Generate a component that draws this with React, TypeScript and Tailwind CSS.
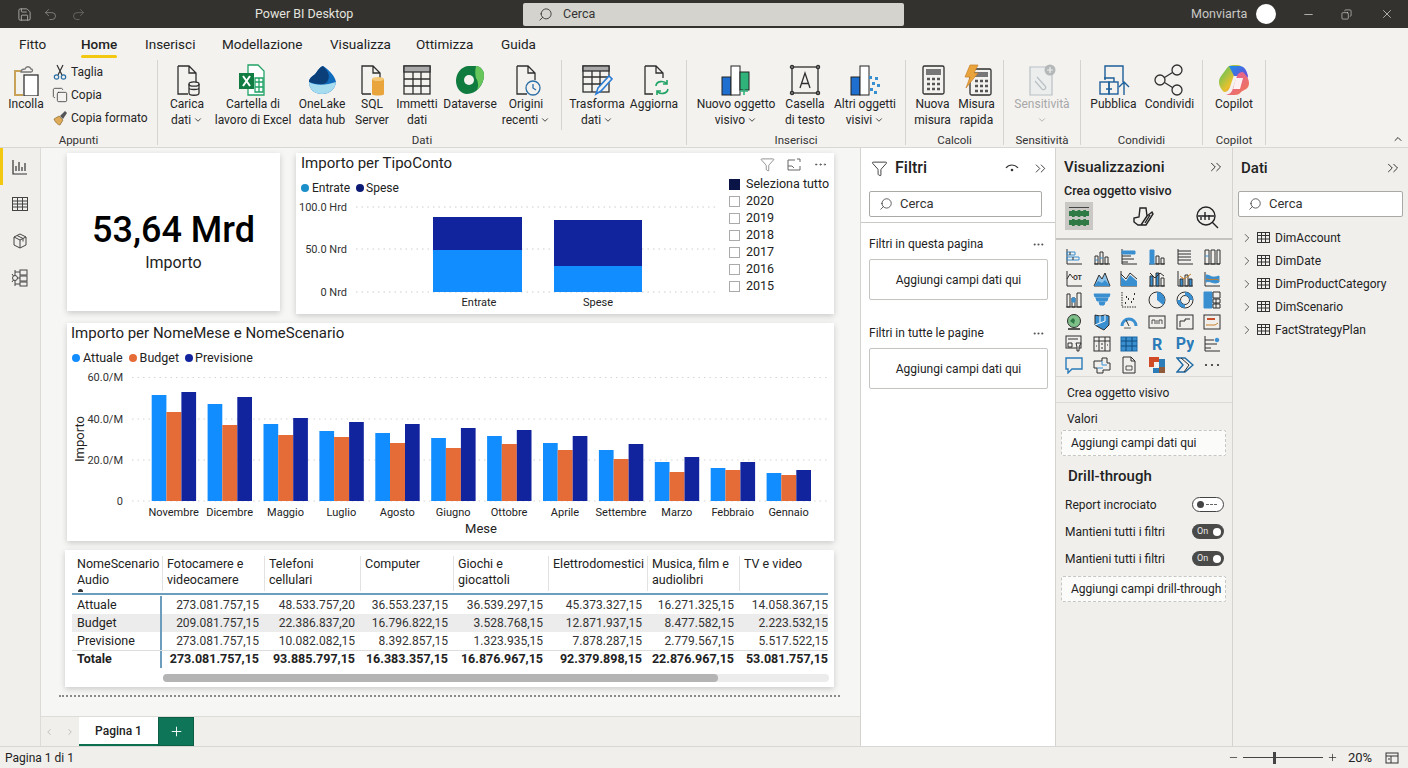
import { ReactNode } from 'react'
import { ChevronDown, ChevronRight, ChevronsRight, ChevronUp, Copy, Ellipsis, Funnel, Minus, Plus, Redo2, Save, Search, Undo2, X } from 'lucide-react'

const INK = '#2f2f2f'
const BLUE = '#3a8fd1'
const LIGHT = '#118DFF'
const NAVY = '#12239E'
const ORANGE = '#E66C37'

const Ico = ({ children }: { children: ReactNode }) => (
  <svg viewBox="0 0 32 32" className="h-[32px] w-[32px]" fill="none" stroke={INK} strokeWidth="1.3">
    {children}
  </svg>
)

const ribbonIcons: Record<string, ReactNode> = {
  paste: (
    <Ico>
      <path d="M13 7H5v24h8" stroke="#c9a25a" strokeWidth="2" />
      <path d="M11 8c0-2 2-3 4-3 1-3 5-3 6 0 2 0 2 3 0 3z" stroke="#777" fill="#f3f2ef" />
      <rect x="14" y="11" width="14" height="21" fill="#fff" stroke="#333" />
    </Ico>
  ),
  load: (
    <Ico>
      <path d="M7 2h11l7 7v9 M18 2v7h7 M7 2v28h10" />
      <ellipse cx="23" cy="20" rx="5" ry="2.2" />
      <path d="M18 20v9c0 3 10 3 10 0v-9 M18 24c0 2 10 2 10 0" />
    </Ico>
  ),
  excel: (
    <Ico>
      <path d="M11 1h10l6 6v24H11z" fill="#fff" stroke="#21a366" />
      <path d="M18 14h8v14h-8z M18 18h8 M18 23h8 M22 14v14" stroke="#21a366" />
      <rect x="2" y="9" width="15" height="16" fill="#107c41" stroke="none" />
      <path d="M6 12l7 10 M13 12l-7 10" stroke="#fff" strokeWidth="2" />
    </Ico>
  ),
  lake: (
    <svg viewBox="0 0 32 32" className="h-[32px] w-[32px]">
      <path d="M17 2c6 4 12 10 13 16-1 8-7 12-14 12C8 30 3 25 3 18 3 13 8 12 10 9c2-3 4-6 7-7z" fill="#0f6cbd" />
      <path d="M17 2c5 5 8 10 4 16-3 4-12 2-18 0C3 13 8 12 10 9c2-3 4-6 7-7z" fill="#0b3f7a" />
      <path d="M3 18c7 4 18 3 27 0-1 8-7 12-14 12C8 30 3 25 3 18z" fill="#a6dcf0" />
    </svg>
  ),
  sql: (
    <Ico>
      <path d="M6 30V2h11l7 7v5 M17 2v7h7 M6 30h9" />
      <path d="M16 15h12v15c0 2-12 2-12 0z" fill="#e9a43b" stroke="none" />
      <ellipse cx="22" cy="15" rx="6" ry="2" fill="#f4c877" stroke="none" />
    </Ico>
  ),
  enter: (
    <Ico>
      <rect x="3" y="2" width="26" height="28" />
      <rect x="3" y="2" width="26" height="6" fill="#aaa" />
      <path d="M3 15h26 M3 22h26 M12 8v22 M20 8v22" />
    </Ico>
  ),
  dataverse: (
    <svg viewBox="0 0 32 32" className="h-[32px] w-[32px]">
      <path d="M14 2c-7 1-12 7-12 15 0 7 5 13 11 13 9 0 17-9 17-19 0-5-4-9-8-9z" fill="#0f7b3f" />
      <path d="M22 2c4 0 8 4 8 9 0 6-3 11-7 15 2-4 1-9-1-12-1-3-1-8 0-12z" fill="#66c65a" />
      <circle cx="15" cy="16" r="5" fill="#f3f2ef" />
    </svg>
  ),
  recent: (
    <Ico>
      <path d="M7 2h11l7 7v7 M18 2v7h7 M7 2v28h10" />
      <circle cx="23" cy="24" r="7" fill="#f3f2ef" stroke="#2b6ea6" />
      <path d="M23 20v4l3 2" stroke="#2b6ea6" />
    </Ico>
  ),
  transform: (
    <Ico>
      <rect x="2" y="2" width="26" height="26" />
      <rect x="2" y="2" width="26" height="5" fill="#aaa" />
      <path d="M2 13h26 M2 20h20 M11 7v21 M19 7v16" />
      <path d="M15 30l2-6L28 12l3 3-11 12z" fill="#f3f2ef" stroke="#2b7cd3" strokeWidth="1.6" />
    </Ico>
  ),
  refresh: (
    <Ico>
      <path d="M7 2h11l7 7v5 M18 2v7h7 M7 2v28h8" />
      <path d="M18 22c0-5 8-6 11-2 M29 16v4h-4 M30 25c-1 5-8 6-11 2 M19 31v-4h4" stroke="#21a366" strokeWidth="1.6" />
    </Ico>
  ),
  visual: (
    <svg viewBox="0 0 32 32" className="h-[32px] w-[32px]">
      <rect x="2" y="13" width="9" height="18" fill="#1f6fd0" stroke="#222" />
      <rect x="11" y="2" width="9" height="29" fill="#fff" stroke="#222" />
      <rect x="20" y="8" width="9" height="18" fill="#2fb37a" stroke="#222" />
      <path d="M24 24v7 M20 27h8" stroke="#2fb37a" strokeWidth="1.6" />
    </svg>
  ),
  textbox: (
    <Ico>
      <rect x="3" y="3" width="26" height="26" />
      <path d="M11 24l5-15 5 15 M12.5 19.5h7" />
      <circle cx="3" cy="3" r="1.6" fill="#888" />
      <circle cx="29" cy="3" r="1.6" fill="#888" />
      <circle cx="3" cy="29" r="1.6" fill="#888" />
      <circle cx="29" cy="29" r="1.6" fill="#888" />
    </Ico>
  ),
  more: (
    <svg viewBox="0 0 32 32" className="h-[32px] w-[32px]">
      <rect x="2" y="13" width="9" height="18" fill="#1f6fd0" stroke="#222" />
      <rect x="11" y="2" width="9" height="29" fill="#fff" stroke="#222" />
      <rect x="20" y="12" width="3" height="3" fill="#3a8fd1" />
      <rect x="26" y="13" width="3" height="3" fill="#3a8fd1" />
      <rect x="23" y="18" width="3" height="3" fill="#3a8fd1" />
      <rect x="28" y="20" width="3" height="3" fill="#3a8fd1" />
      <rect x="21" y="24" width="3" height="3" fill="#3a8fd1" />
      <rect x="25" y="27" width="3" height="3" fill="#3a8fd1" />
    </svg>
  ),
  calc: (
    <Ico>
      <rect x="6" y="2" width="21" height="28" rx="1.5" />
      <rect x="9" y="5" width="15" height="6" fill="#777" stroke="none" />
      <path d="M10 15h3 M15 15h3 M20 15h3 M10 20h3 M15 20h3 M20 20h3 M10 25h3 M15 25h3 M20 25h3" strokeWidth="2.6" stroke="#555" />
    </Ico>
  ),
  quick: (
    <Ico>
      <rect x="9" y="5" width="21" height="26" rx="1.5" />
      <rect x="13" y="8" width="14" height="5" fill="#777" stroke="none" />
      <path d="M14 17h3 M19 17h3 M24 17h3 M14 22h3 M19 22h3 M24 22h3 M14 27h3 M19 27h3 M24 27h3" strokeWidth="2.6" stroke="#555" />
      <path d="M9 1h8l-4 8h4L5 24l4-11H4z" fill="#e9a43b" stroke="#c9802a" strokeWidth="0.7" />
    </Ico>
  ),
  sens: (
    <svg viewBox="0 0 32 32" className="h-[32px] w-[32px]" fill="none" stroke="#b9c0c4" strokeWidth="1.2">
      <path d="M4 3h16l6 6v22H4z" fill="#eceeee" />
      <path d="M11 13l8 9c2 2-1 5-3 3l-7-8" />
      <circle cx="24" cy="6" r="5.5" fill="#b5b8b8" stroke="none" />
      <path d="M24 3v6 M21 6h6" stroke="#eee" />
    </svg>
  ),
  publish: (
    <svg viewBox="0 0 32 32" className="h-[32px] w-[32px]" fill="none" stroke="#1d5f99" strokeWidth="1.4">
      <path d="M7 16V2h18v16" />
      <rect x="2" y="18" width="9" height="12" />
      <rect x="11" y="18" width="9" height="12" />
      <path d="M6 14h10v4 M8 25h6" />
      <path d="M26 31V18 M21 23l5-5 5 5" />
    </svg>
  ),
  share: (
    <Ico>
      <circle cx="23" cy="6" r="5" />
      <circle cx="6" cy="16" r="5" />
      <circle cx="23" cy="26" r="5" />
      <path d="M10.5 13.5L18.5 8.5 M10.5 18.5l8 5" />
    </Ico>
  ),
  copilot: (
    <svg viewBox="0 0 32 32" className="h-[32px] w-[32px]">
      <defs>
        <linearGradient id="cpa" x1="0" y1="0" x2="1" y2="1">
          <stop offset="0" stopColor="#1b8fe8" />
          <stop offset="1" stopColor="#7a3fd6" />
        </linearGradient>
        <linearGradient id="cpb" x1="0" y1="0" x2="1" y2="1">
          <stop offset="0" stopColor="#41c463" />
          <stop offset="0.6" stopColor="#e8c12e" />
          <stop offset="1" stopColor="#e8563a" />
        </linearGradient>
        <linearGradient id="cpc" x1="0" y1="0" x2="1" y2="1">
          <stop offset="0" stopColor="#e25bb0" />
          <stop offset="1" stopColor="#f0794a" />
        </linearGradient>
      </defs>
      <path d="M9 4c2-3 5-3 9-3h5c-4 1-5 3-6 7l-5 15c-1 3-3 5-6 5 0 0-5-4-5-10 0-5 4-8 8-14z" fill="url(#cpb)" />
      <path d="M11 2h10c4 0 7 2 9 10l-2 6-6-6h-6z" fill="url(#cpa)" />
      <path d="M23 28c-2 3-5 3-9 3H8c4-1 6-3 7-7l4-12c1-3 3-4 6-4 0 0 6 5 6 11s-4 6-8 9z" fill="url(#cpc)" />
      <path d="M18 14h7l-3 11h-7z" fill="#fff" opacity="0.9" />
    </svg>
  ),
}

type RibbonItem = { w: string; icon: string; lines: string[]; chevron?: boolean; muted?: boolean }

const dataItems: RibbonItem[] = [
  { w: 'w-[58px]', icon: 'load', lines: ['Carica', 'dati'], chevron: true },
  { w: 'w-[74px]', icon: 'excel', lines: ['Cartella di', 'lavoro di Excel'] },
  { w: 'w-[64px]', icon: 'lake', lines: ['OneLake', 'data hub'] },
  { w: 'w-[36px]', icon: 'sql', lines: ['SQL', 'Server'] },
  { w: 'w-[54px]', icon: 'enter', lines: ['Immetti', 'dati'] },
  { w: 'w-[52px]', icon: 'dataverse', lines: ['Dataverse'] },
  { w: 'w-[60px]', icon: 'recent', lines: ['Origini', 'recenti'], chevron: true },
]

const RibbonButton = ({ item }: { item: RibbonItem }) => (
  <div className={`${item.w} flex shrink-0 flex-col items-center pt-[4px]`}>
    <div className="flex h-[32px] items-center justify-center">{ribbonIcons[item.icon]}</div>
    {item.lines.map((line, i) => (
      <div
        key={line}
        className={`flex items-center gap-[2px] whitespace-nowrap text-[12px] leading-[16px] ${item.muted ? 'text-[#a8a8a8]' : 'text-[#252525]'}`}
      >
        {line}
        {item.chevron && i === item.lines.length - 1 && <ChevronDown size={10} strokeWidth={2} />}
      </div>
    ))}
    {item.muted && <ChevronDown size={10} color="#a8a8a8" className="mt-[3px]" />}
  </div>
)

const RibbonGroup = ({ w, label, children }: { w: string; label: string; children: ReactNode }) => (
  <div className={`${w} flex shrink-0 flex-col`}>
    <div className="flex h-[72px] justify-center">{children}</div>
    <div className="h-[13px] text-center text-[11.5px] leading-[16px] text-[#333]">{label}</div>
  </div>
)

const Sep = () => <div className="h-[85px] w-px shrink-0 bg-[#d5d4d0]" />

const TitleBar = () => (
  <div className="flex h-[28px] items-center bg-[#33322f] text-[#e4e3df]">
    <div className="flex w-[523px] items-center">
      <Save size={15} strokeWidth={1.3} color="#bdbdb8" className="ml-[17px]" />
      <Undo2 size={15} strokeWidth={1.3} color="#8c8b87" className="ml-[11px]" />
      <Redo2 size={15} strokeWidth={1.3} color="#6f6e6a" className="ml-[13px]" />
      <span className="ml-[169px] text-[12.5px]">Power BI Desktop</span>
    </div>
    <div className="flex h-[23px] w-[381px] items-center rounded-[2px] bg-[#d4d3ce] pl-[15px] text-[#333]">
      <Search size={15} strokeWidth={1.4} className="-scale-x-100" />
      <span className="ml-[10px] text-[12.5px]">Cerca</span>
    </div>
    <span className="ml-[287px] text-[12.5px] text-[#c9c8c4]">Monviarta</span>
    <div className="ml-[9px] h-[20px] w-[20px] rounded-full bg-white" />
    <Minus size={13} strokeWidth={1.3} className="ml-[26px]" />
    <Copy size={11} strokeWidth={1.3} className="ml-[26px] -scale-x-100" />
    <X size={14} strokeWidth={1.2} className="ml-[28px]" />
  </div>
)

const MenuTabs = () => (
  <div className="flex h-[32px] items-center bg-[#f3f2ef] pl-[19px] text-[13.5px] text-[#222]">
    <span className="w-[62px]">Fitto</span>
    <span className="w-[64px]">
      <span className="relative font-medium">
        Home
        <span className="absolute bottom-[-6px] left-0 h-[3px] w-full rounded-full bg-[#f2c811]" />
      </span>
    </span>
    <span className="w-[77px]">Inserisci</span>
    <span className="w-[108px]">Modellazione</span>
    <span className="w-[86px]">Visualizza</span>
    <span className="w-[85px]">Ottimizza</span>
    <span>Guida</span>
  </div>
)

const Ribbon = () => (
  <div className="flex h-[88px] border-b border-[#d8d7d3] bg-[#f3f2ef]">
    <RibbonGroup w="w-[157px]" label="Appunti">
      <div className="flex w-full">
        <RibbonButton item={{ w: 'w-[52px]', icon: 'paste', lines: ['Incolla'] }} />
        <div className="flex flex-col gap-[5px] pt-[3px] text-[12px] leading-[18px] text-[#252525]">
          <div className="flex items-center gap-[3px]">
            <svg viewBox="0 0 16 16" className="h-[16px] w-[16px]" fill="none" strokeWidth="1.2">
              <path d="M5 1l5 10 M11 1L6 11" stroke="#333" />
              <circle cx="4.5" cy="13" r="2.2" stroke="#2b6ea6" />
              <circle cx="11.5" cy="13" r="2.2" stroke="#2b6ea6" />
            </svg>
            Taglia
          </div>
          <div className="flex items-center gap-[3px]">
            <Copy size={16} strokeWidth={1.2} color="#333" />
            Copia
          </div>
          <div className="flex items-center gap-[3px]">
            <svg viewBox="0 0 16 16" className="h-[16px] w-[16px]">
              <path d="M2 9l5-3 4 4-3 5c-2 0-5-3-6-6z" fill="#e0ab58" stroke="#8a6a30" strokeWidth="0.7" />
              <path d="M8 6l5-5 2 2-4 6z" fill="#555" />
            </svg>
            Copia formato
          </div>
        </div>
      </div>
    </RibbonGroup>
    <Sep />
    <RibbonGroup w="w-[528px]" label="Dati">
      <div className="flex w-full">
        {dataItems.map((item) => (
          <RibbonButton key={item.icon} item={item} />
        ))}
        <div className="mr-px h-[70px] w-[6px] shrink-0 border-r border-[#d5d4d0]" />
        <RibbonButton item={{ w: 'w-[68px]', icon: 'transform', lines: ['Trasforma', 'dati'], chevron: true }} />
        <RibbonButton item={{ w: 'w-[46px]', icon: 'refresh', lines: ['Aggiorna'] }} />
      </div>
    </RibbonGroup>
    <Sep />
    <RibbonGroup w="w-[218px]" label="Inserisci">
      <RibbonButton item={{ w: 'w-[94px]', icon: 'visual', lines: ['Nuovo oggetto', 'visivo'], chevron: true }} />
      <RibbonButton item={{ w: 'w-[44px]', icon: 'textbox', lines: ['Casella', 'di testo'] }} />
      <RibbonButton item={{ w: 'w-[76px]', icon: 'more', lines: ['Altri oggetti', 'visivi'], chevron: true }} />
    </RibbonGroup>
    <Sep />
    <RibbonGroup w="w-[97px]" label="Calcoli">
      <RibbonButton item={{ w: 'w-[44px]', icon: 'calc', lines: ['Nuova', 'misura'] }} />
      <RibbonButton item={{ w: 'w-[44px]', icon: 'quick', lines: ['Misura', 'rapida'] }} />
    </RibbonGroup>
    <Sep />
    <RibbonGroup w="w-[76px]" label="Sensitività">
      <RibbonButton item={{ w: 'w-[76px]', icon: 'sens', lines: ['Sensitività'], muted: true }} />
    </RibbonGroup>
    <Sep />
    <RibbonGroup w="w-[121px]" label="Condividi">
      <RibbonButton item={{ w: 'w-[56px]', icon: 'publish', lines: ['Pubblica'] }} />
      <RibbonButton item={{ w: 'w-[56px]', icon: 'share', lines: ['Condividi'] }} />
    </RibbonGroup>
    <Sep />
    <RibbonGroup w="w-[62px]" label="Copilot">
      <RibbonButton item={{ w: 'w-[62px]', icon: 'copilot', lines: ['Copilot'] }} />
    </RibbonGroup>
    <Sep />
    <div className="flex flex-1 items-end justify-end pb-[2px] pr-[4px]">
      <ChevronUp size={12} strokeWidth={2} color="#333" />
    </div>
  </div>
)

const Rail = () => (
  <div className="flex w-[41px] shrink-0 flex-col border-r border-[#dcdbd7] bg-[#f0efeb]">
    <div className="flex h-[37px] items-center border-l-[3px] border-[#f2c811] pl-[9px]">
      <svg viewBox="0 0 16 16" className="h-[16px] w-[16px]" fill="none" stroke="#333" strokeWidth="1.2">
        <path d="M1 1v14h14 M4 12V7 M7 12V3 M10 12V8 M13 12V4" />
      </svg>
    </div>
    <div className="flex h-[37px] items-center pl-[12px]">
      <svg viewBox="0 0 16 16" className="h-[16px] w-[16px]" fill="none" stroke="#444" strokeWidth="1">
        <rect x="0.5" y="1.5" width="15" height="13" />
        <path d="M0.5 5h15 M0.5 8h15 M0.5 11h15 M5.5 1.5v13 M10.5 1.5v13" />
      </svg>
    </div>
    <div className="flex h-[37px] items-center pl-[12px]">
      <svg viewBox="0 0 16 16" className="h-[16px] w-[16px]" fill="none" stroke="#444" strokeWidth="1">
        <path d="M8 1l6 3v8l-6 3-6-3V4z M2 4l6 3 6-3 M8 7v8 M5 2.5l6 3v3" />
      </svg>
    </div>
    <div className="flex h-[37px] items-center pl-[11px]">
      <svg viewBox="0 0 18 18" className="h-[18px] w-[18px]" fill="none" stroke="#444" strokeWidth="1">
        <rect x="9" y="1" width="7" height="5" />
        <rect x="9" y="7" width="7" height="5" />
        <rect x="9" y="13" width="7" height="4" />
        <circle cx="4" cy="9" r="2.5" />
        <path d="M6.5 9H9 M4 1v5.5 M4 11.5V17 M1 5l1.5 2 M1 13l1.5-2 M4 3h5 M4 15h5" />
      </svg>
    </div>
  </div>
)

const Dot = ({ color }: { color: string }) => <span className="h-[8px] w-[8px] shrink-0 rounded-full" style={{ backgroundColor: color }} />

const years = ['2020', '2019', '2018', '2017', '2016', '2015']

const TypeChart = () => (
  <div className="flex h-[161px] w-[538px] bg-white shadow-[0_2px_6px_rgba(0,0,0,0.18)]">
    <div className="flex w-[429px] flex-col">
      <div className="h-[20px] pl-[5px] text-[15px] leading-[20px] text-[#222]">Importo per TipoConto</div>
      <div className="mt-[5px] flex h-[20px] items-center pl-[5px] text-[12px] text-[#222]">
        <Dot color="#1b8fc9" />
        <span className="ml-[3px]">Entrate</span>
        <span className="ml-[6px]" />
        <Dot color="#0d1a73" />
        <span className="ml-[2px]">Spese</span>
      </div>
      <svg viewBox="0 0 429 112" className="mt-px h-[112px] w-[429px]" fontFamily="Roboto, sans-serif" fontSize="11">
        <path d="M60 8h362 M60 50h362 M60 93h362" stroke="#ccc" strokeDasharray="1.5 4" />
        <text x="51" y="12" textAnchor="end" fill="#333">100.0 Hrd</text>
        <text x="51" y="54" textAnchor="end" fill="#333">50.0 Nrd</text>
        <text x="51" y="97" textAnchor="end" fill="#333">0 Nrd</text>
        <rect x="137" y="18" width="89" height="33" fill={NAVY} />
        <rect x="137" y="51" width="89" height="42" fill={LIGHT} />
        <rect x="258" y="21" width="88" height="46" fill={NAVY} />
        <rect x="258" y="67" width="88" height="26" fill={LIGHT} />
        <text x="183" y="107" textAnchor="middle" fill="#222">Entrate</text>
        <text x="302" y="107" textAnchor="middle" fill="#222">Spese</text>
      </svg>
    </div>
    <div className="flex flex-1 flex-col">
      <div className="flex h-[23px] items-center justify-end gap-[12px] pr-[6px]">
        <Funnel size={15} strokeWidth={1} color="#555" />
        <svg viewBox="0 0 14 14" className="h-[14px] w-[14px]" fill="none" stroke="#666" strokeWidth="1">
          <path d="M8 2H1v10h12V8 M10 1h3v3 M1 8h4l2 2" />
        </svg>
        <Ellipsis size={15} strokeWidth={1.5} color="#555" />
      </div>
      <div className="flex h-[17px] items-center text-[12.5px] text-[#222]">
        <span className="ml-[4px] mr-[6px] h-[11px] w-[11px] bg-[#0a1447]" />
        Seleziona tutto
      </div>
      {years.map((y) => (
        <div key={y} className="flex h-[17px] items-center text-[12.5px] text-[#222]">
          <span className="ml-[4px] mr-[6px] h-[11px] w-[11px] border border-[#aaa] bg-white" />
          {y}
        </div>
      ))}
    </div>
  </div>
)

const months: [string, number, number, number][] = [
  ['Novembre', 395, 412, 392],
  ['Dicembre', 404, 425, 397],
  ['Maggio', 424, 435, 418],
  ['Luglio', 431, 437, 422],
  ['Agosto', 433, 443, 424],
  ['Giugno', 438, 448, 428],
  ['Ottobre', 436, 444, 430],
  ['Aprile', 443, 450, 436],
  ['Settembre', 450, 459, 444],
  ['Marzo', 462, 472, 457],
  ['Febbraio', 468, 470, 462],
  ['Gennaio', 473, 475, 470],
]

const MonthChart = () => (
  <div className="mt-[9px] flex h-[218px] w-[767px] flex-col bg-white shadow-[0_2px_6px_rgba(0,0,0,0.18)]">
    <div className="h-[20px] pl-[4px] text-[15px] leading-[20px] text-[#222]">Importo per NomeMese e NomeScenario</div>
    <div className="mt-[5px] flex h-[20px] items-center pl-[5px] text-[12.5px] text-[#222]">
      <Dot color={LIGHT} />
      <span className="ml-[3px]">Attuale</span>
      <span className="ml-[6px]" />
      <Dot color={ORANGE} />
      <span className="ml-[3px]">Budget</span>
      <span className="ml-[6px]" />
      <Dot color={NAVY} />
      <span className="ml-[2px]">Previsione</span>
    </div>
    <svg viewBox="0 0 767 173" className="h-[173px] w-[767px]" fontFamily="Roboto, sans-serif" fontSize="12">
      <path d="M65 9.5h696 M65 51h696 M65 92h696 M65 133h696" stroke="#d4d4d4" strokeDasharray="1.5 4" />
      <text x="56" y="13" textAnchor="end" fill="#333" fontSize="11">60.0/M</text>
      <text x="56" y="55" textAnchor="end" fill="#333" fontSize="11">40.0/M</text>
      <text x="56" y="96" textAnchor="end" fill="#333" fontSize="11">20.0/M</text>
      <text x="56" y="137" textAnchor="end" fill="#333" fontSize="11">0</text>
      <text transform="translate(17 71) rotate(-90)" textAnchor="middle" fill="#222" fontSize="13">Importo</text>
      {months.map(([name, a, b, p], i) => {
        const x = 84.7 + i * 55.9
        return (
          <g key={name}>
            <rect x={x} y={a - 368} width={14.7} height={501 - a} fill={LIGHT} />
            <rect x={x + 14.7} y={b - 368} width={15} height={501 - b} fill={ORANGE} />
            <rect x={x + 29.7} y={p - 368} width={14.7} height={501 - p} fill={NAVY} />
            <text x={x + 22} y={148} textAnchor="middle" fill="#222" fontSize="11">{name}</text>
          </g>
        )
      })}
      <text x="414" y="165" textAnchor="middle" fill="#222" fontSize="13">Mese</text>
    </svg>
  </div>
)

const columns = ['w-[102px]', 'w-[96px]', 'w-[93px]', 'w-[95px]', 'w-[99px]', 'w-[92px]', 'w-[94px]']
const headers = [['Fotocamere e', 'videocamere'], ['Telefoni', 'cellulari'], ['Computer'], ['Giochi e', 'giocattoli'], ['Elettrodomestici'], ['Musica, film e', 'audiolibri'], ['TV e video']]
const rows: [string, string[]][] = [
  ['Attuale', ['273.081.757,15', '48.533.757,20', '36.553.237,15', '36.539.297,15', '45.373.327,15', '16.271.325,15', '14.058.367,15']],
  ['Budget', ['209.081.757,15', '22.386.837,20', '16.796.822,15', '3.528.768,15', '12.871.937,15', '8.477.582,15', '2.223.532,15']],
  ['Previsione', ['273.081.757,15', '10.082.082,15', '8.392.857,15', '1.323.935,15', '7.878.287,15', '2.779.567,15', '5.517.522,15']],
]
const totals = ['273.081.757,15', '93.885.797,15', '16.383.357,15', '16.876.967,15', '92.379.898,15', '22.876.967,15', '53.081.757,15']

const Matrix = () => (
  <div className="-ml-[2px] mt-[9px] h-[137px] w-[769px] overflow-hidden bg-white pl-[7px] pt-[6px] shadow-[0_2px_6px_rgba(0,0,0,0.18)]">
    <div className="flex h-[39px] w-[756px] border-b-2 border-[#6d9dbd] text-[12.5px] leading-[16px] text-[#222]">
      <div className="w-[90px] shrink-0 pl-[5px]">
        NomeScenario
        <br />
        Audio
        <div className="ml-[1px] mt-[1px] h-[3px] w-[5px] rounded-t-full bg-[#333]" />
      </div>
      {headers.map((h, i) => (
        <div key={h[0]} className={`${columns[i]} h-[35px] shrink-0 border-l border-[#e2e2e2] pl-[4px]`}>
          {h.map((line) => (
            <div key={line} className="whitespace-nowrap">{line}</div>
          ))}
        </div>
      ))}
    </div>
    {rows.map(([name, values], r) => (
      <div key={name} className={`flex h-[18px] w-[756px] items-center text-[12px] text-[#333] ${r === 0 ? 'mt-px' : ''} ${r === 1 ? 'bg-[#ececec]' : ''}`}>
        <div className="flex h-full w-[90px] shrink-0 items-center border-r-2 border-[#6d9dbd] pl-[5px] text-[12.5px] text-[#222]">{name}</div>
        {values.map((v, i) => (
          <div key={i} className={`${columns[i]} shrink-0 pr-[5px] text-right`}>{v}</div>
        ))}
      </div>
    ))}
    <div className="flex h-[18px] w-[756px] items-center border-t border-[#ddd] text-[12.5px] font-bold text-[#222]">
      <div className="flex h-full w-[90px] shrink-0 items-center border-r-2 border-[#6d9dbd] pl-[5px]">Totale</div>
      {totals.map((v, i) => (
        <div key={i} className={`${columns[i]} shrink-0 pr-[5px] text-right`}>{v}</div>
      ))}
    </div>
    <div className="ml-[91px] mt-[6px] h-[8px] w-[666px] rounded-full bg-[#ececec]">
      <div className="h-full w-[555px] rounded-full bg-[#b4b4b4]" />
    </div>
  </div>
)

const Canvas = () => (
  <div className="flex-1 bg-[#f6f6f4]">
    <div className="ml-[18px] h-[549px] w-[781px] border-b-2 border-dotted border-[#8a8a8a] pl-[8px] pt-[5px]">
      <div className="flex gap-[16px]">
        <div className="flex h-[158px] w-[213px] flex-col items-center justify-center bg-white pt-[18px] shadow-[0_2px_6px_rgba(0,0,0,0.18)]">
          <div className="text-[36px] font-medium leading-[42px] text-black">53,64 Mrd</div>
          <div className="mt-[2px] text-[16px] leading-[20px] text-[#222]">Importo</div>
        </div>
        <TypeChart />
      </div>
      <MonthChart />
      <Matrix />
    </div>
  </div>
)

const PageTabs = () => (
  <div className="flex h-[30px] shrink-0 border-t border-[#dddcd8] bg-[#f0efeb]">
    <ChevronRight size={10} color="#b5b5b5" className="ml-[3px] mt-[10px] rotate-180" />
    <ChevronRight size={10} color="#b5b5b5" className="ml-[11px] mt-[10px]" />
    <div className="ml-[4px] flex w-[79px] items-center justify-center border-b-2 border-[#0b6e4f] bg-white text-[12px] font-medium text-[#222]">Pagina 1</div>
    <div className="flex w-[36px] items-center justify-center border border-[#0a5f44] bg-[#0f7558]">
      <Plus size={15} strokeWidth={1.5} color="#fff" />
    </div>
  </div>
)

const SearchBox = ({ w, bg }: { w: string; bg: string }) => (
  <div className={`${w} ${bg} flex h-[26px] items-center rounded-[2px] border border-[#a9a9a6] pl-[9px] text-[13px] text-[#333]`}>
    <Search size={14} strokeWidth={1.3} className="-scale-x-100" />
    <span className="ml-[7px]">Cerca</span>
  </div>
)

const FilterPane = () => (
  <div className="w-[196px] shrink-0 border-l border-r border-[#d4d3cf] bg-white text-[#222]">
    <div className="flex h-[38px] items-center pl-[10px] pt-[2px]">
      <Funnel size={17} strokeWidth={1.2} className="shrink-0" />
      <span className="ml-[7px] w-[30px] text-[16px] font-medium">Filtri</span>
      <svg viewBox="0 0 16 16" className="ml-[79px] h-[16px] w-[16px] shrink-0" fill="none" stroke="#333" strokeWidth="1.2">
        <path d="M2 8c3-4 9-4 12 0" />
        <circle cx="8" cy="10" r="1.3" fill="#333" stroke="none" />
      </svg>
      <ChevronsRight size={17} strokeWidth={1.2} className="ml-[12px] shrink-0" />
    </div>
    <div className="pb-[5px] pl-[8px] pt-[5px]">
      <SearchBox w="w-[173px]" bg="bg-white" />
    </div>
    <div className="border-t border-[#c9c9c6] px-[8px]">
      <div className="flex h-[36px] items-center justify-between pr-[2px] pt-[6px] text-[12px]">
        Filtri in questa pagina
        <Ellipsis size={13} color="#555" />
      </div>
      <div className="flex h-[41px] w-[179px] items-center justify-center rounded-[2px] border border-[#c4c4c1] text-[12px]">Aggiungi campi dati qui</div>
      <div className="mt-[19px] flex h-[28px] items-center justify-between pr-[2px] text-[12px]">
        Filtri in tutte le pagine
        <Ellipsis size={13} color="#555" />
      </div>
      <div className="mt-px flex h-[41px] w-[179px] items-center justify-center rounded-[2px] border border-[#c4c4c1] text-[12px]">Aggiungi campi dati qui</div>
    </div>
  </div>
)

const g = (children: ReactNode) => children

const gallery: ReactNode[] = [
  g(<><path d="M2 1v15h15" /><path d="M2 4h8v3H2z M2 9h12v3H2z" stroke={BLUE} /><path d="M5 4v3 M8 9v3" /></>),
  g(<><path d="M1 16h16" /><path d="M2 8h3v8H2z M7 4h3v12H7z M12 9h3v7h-3z" /><path d="M7 10h3 M2 12h3" stroke={BLUE} /></>),
  g(<><path d="M2 1v15h15" /><path d="M2 3h13v3H2z" fill={BLUE} stroke={BLUE} /><path d="M2 8h9 M2 11h12 M2 14h6" /></>),
  g(<><path d="M1 16h16" /><path d="M2 2h4v14H2z" fill={BLUE} stroke={BLUE} /><path d="M8 8h3v8H8z M13 10h3v6h-3z" /></>),
  g(<><path d="M2 1v15h15" /><path d="M2 3h13 M2 6h13 M2 9h13 M2 12h13" /></>),
  g(<><path d="M1 16h16" /><path d="M2 2h4v14H2z M8 2h4v14H8z M14 2h3v14h-3z" /><path d="M2 8h4" stroke={BLUE} /></>),
  g(<><path d="M2 1v15h15" /><path d="M2 9l3-5 3 4" /><text x="8" y="10" fontSize="7" fontWeight="bold" fill={INK} stroke="none">OT</text></>),
  g(<><path d="M1 16l5-11 3 4 3-6 5 13z" fill="#8dc3ea" /><path d="M1 16l4-5 4 2 3-3 5 6z" fill={BLUE} stroke="none" /></>),
  g(<><path d="M1 1v15h16" /><path d="M1 6l5 5 4-6 7 6v5H1z" fill={BLUE} stroke="none" /><path d="M1 4l5 5 4-6 7 6" /></>),
  g(<><path d="M1 16h16" /><path d="M2 6h3v10H2z M8 3h3v13H8z" fill={BLUE} /><path d="M13 8h3v8h-3z" /><path d="M2 3l5 5 5-5 4 3" /></>),
  g(<><path d="M2 1v15h15" /><path d="M4 9h3v7H4z" fill={BLUE} /><path d="M9 5h3v11H9z" /><path d="M13 9h3v7h-3z" fill={BLUE} /><path d="M4 6l4 3 7-5" stroke="#c9802a" /></>),
  g(<><path d="M2 2v14h15" /><path d="M3 5c5 0 5 4 13 1v6c-6 3-8-2-13 0z" fill={BLUE} stroke={BLUE} /><path d="M3 9c5 2 8-1 13 1" stroke="#c9802a" /></>),
  g(<><path d="M1 16h16 M2 3h3v13H2z M7 7h3v9H7z M12 2h4v14h-4z" /><path d="M7 7h3v4H7z" fill={BLUE} stroke={BLUE} /></>),
  g(<><path d="M1 3h16l-1 3H2z M3 7h12l-1 3H4z M6 11h6l-1 3H7z" fill={BLUE} stroke={BLUE} /></>),
  g(<><path d="M2 1v15h15" strokeDasharray="1.5 1" /><path d="M5 12h1 M8 8h1 M6 6h1 M11 11h1 M14 3h1 M13 8h1" strokeWidth="2" /></>),
  g(<><circle cx="9" cy="9" r="8" /><path d="M9 9V1a8 8 0 0 1 6 13z" fill={BLUE} stroke="none" /></>),
  g(<><circle cx="9" cy="9" r="8" /><circle cx="9" cy="9" r="4.5" /><path d="M9 1a8 8 0 0 1 8 8h-3.5A4.5 4.5 0 0 0 9 4.5z M9 17a8 8 0 0 1-8-8h3.5A4.5 4.5 0 0 0 9 13.5z" fill={BLUE} stroke="none" /></>),
  g(<><path d="M1 1h8v16H1z" fill={BLUE} stroke={BLUE} /><path d="M10 1h7v6h-7z M10 8h7v4h-7z M10 13h7v4h-7z M13 8v9" /></>),
  g(<><circle cx="9" cy="8" r="6.5" fill="#7fbf8a" /><path d="M5 8l3-3 2 2-1 4z" fill="#2f7a45" stroke="none" /><path d="M3 16h12" strokeWidth="1.6" /></>),
  g(<><path d="M2 2l5 1 5-1 4 1v9l-5 5-4-2-5-3z" fill={BLUE} /><path d="M7 3v7l-5 2 M7 10l5-2V2" stroke="#fff" /></>),
  g(<><path d="M2 13a7 7 0 0 1 14 0" stroke={BLUE} strokeWidth="3" /><path d="M9 13L6 7" /><text x="4" y="16" fontSize="4" fill={INK} stroke="none">ooo</text></>),
  g(<><rect x="1" y="3" width="16" height="12" /><path d="M4 11V7h3v4 M9 11V7 M11 11V7h3v4" strokeWidth="0.8" /></>),
  g(<><rect x="1" y="2" width="16" height="14" /><path d="M4 14V8h5V6h5" /></>),
  g(<><rect x="1" y="2" width="16" height="14" /><path d="M3 12h9l3-2" stroke="#c9802a" /><path d="M4 6h8" stroke="#c9502a" strokeWidth="2" /></>),
  g(<><rect x="1" y="1" width="15" height="12" /><path d="M3 4h10 M3 8h4v4H3z" /><path d="M11 8l5 0-2 4v4h-2v-4z" fill="#f3f2ef" /></>),
  g(<><rect x="1" y="2" width="16" height="14" /><path d="M1 6h16 M6 2v14 M12 2v14 M3 11h1 M8 9h2 M8 13h2 M14 10h1" /></>),
  g(<><rect x="1" y="2" width="16" height="14" fill={BLUE} stroke="#1d6aa5" /><path d="M1 6h16 M1 11h16 M6 2v14 M12 2v14" stroke="#0f4d7d" /></>),
  <text x="9" y="15" textAnchor="middle" fontSize="16" fontWeight="bold" fill="#2b7cb8" stroke="none">R</text>,
  <text x="9" y="14" textAnchor="middle" fontSize="16" fontWeight="bold" fill="#2b7cb8" stroke="none">Py</text>,
  g(<><path d="M2 1v15h15" /><path d="M2 5h9 M2 9h12" /><path d="M2 13h6" /><circle cx="14" cy="5" r="1.8" fill={BLUE} stroke={BLUE} /></>),
  g(<><path d="M1 2h16v11H7l-4 4v-4H1z" stroke="#2b7cb8" strokeWidth="1.4" /></>),
  g(<><path d="M3 5h6V2h5v5h3v7h-7v3H4v-5H1V5z" /><path d="M9 5v4h5 M4 12h6" stroke={BLUE} /></>),
  g(<><path d="M3 1h8l4 4v12H3z M11 1v4h4" /><path d="M6 10h6v4H6z" strokeWidth="0.8" /></>),
  <g stroke="none"><path d="M1 1h10v5H6v5H1z" fill="#d04a26" /><path d="M11 3h6v14H5v-5h6z" fill="#2b7cb8" /><path d="M8 8h3v3H8z" fill="#f3f2ef" /><path d="M11 11h6v6h-6z" fill="#8f5a3a" /></g>,
  g(<><path d="M1 2h8l8 7-8 7H1l6-7z" stroke="#1d6aa5" strokeWidth="1.4" /><path d="M5 2l8 7-5 7" /></>),
  <g fill={INK} stroke="none"><circle cx="3" cy="9" r="1.1" /><circle cx="9" cy="9" r="1.1" /><circle cx="15" cy="9" r="1.1" /></g>,
]

const Dropzone = ({ children }: { children: ReactNode }) => (
  <div className="ml-[5px] flex h-[26px] w-[165px] items-center whitespace-nowrap rounded-[2px] border border-dashed border-[#c6c6c2] bg-[#fbfbfa] pl-[9px] text-[12px] text-[#222]">{children}</div>
)

const Toggle = ({ on }: { on: boolean }) =>
  on ? (
    <div className="flex h-[15px] w-[32px] items-center justify-between rounded-full bg-[#4a4a48] pl-[5px] pr-[3px] text-[9px] text-[#e8e8e8]">
      On
      <span className="h-[8px] w-[8px] rounded-full bg-white" />
    </div>
  ) : (
    <div className="flex h-[15px] w-[32px] items-center gap-[2px] rounded-full border border-[#444] bg-white pl-[4px]">
      <span className="h-[7px] w-[7px] rounded-full bg-[#444]" />
      <span className="w-[11px] border-t border-dashed border-[#666]" />
    </div>
  )

const VizPane = () => (
  <div className="flex w-[177px] shrink-0 flex-col border-r border-[#d4d3cf] bg-[#f0efec] text-[#222]">
    <div className="flex h-[36px] items-center justify-between pl-[8px] pr-[7px] pt-[2px]">
      <span className="text-[15px] font-medium">Visualizzazioni</span>
      <ChevronsRight size={18} strokeWidth={1.2} />
    </div>
    <div className="h-[18px] pl-[8px] text-[12.5px] font-medium leading-[14px]">Crea oggetto visivo</div>
    <div className="flex h-[38px] items-start border-b-2 border-[#c4c3bf] pl-[9px]">
      <div className="flex h-[28px] w-[28px] flex-col items-center justify-center gap-[2px] bg-[#c9c8c4]">
        <div className="w-[20px] border-t border-[#444]" />
        <div className="h-[7px] w-[20px] border-y border-dashed border-[#c9c8c4] bg-[#2f7a45]" />
        <div className="h-[7px] w-[20px] border-y border-dashed border-[#c9c8c4] bg-[#2f7a45]" />
      </div>
      <svg viewBox="0 0 24 24" className="ml-[38px] mt-[3px] h-[24px] w-[24px]" fill="none" stroke="#222" strokeWidth="1.4">
        <path d="M9 3h6l1 8 5-4 1 2-7 11H7l-4-3v-4l5-1z M16 11l-6 9 M19 10l-5 8" />
      </svg>
      <svg viewBox="0 0 24 24" className="ml-[40px] mt-[3px] h-[24px] w-[24px]" fill="none" stroke="#222" strokeWidth="1.4">
        <circle cx="11" cy="11" r="9" />
        <path d="M17 17l6 6 M6 15v-3 M10 15V7 M14 15v-5 M3 11h16" />
      </svg>
    </div>
    <div className="grid h-[137px] grid-cols-[repeat(6,27.7px)] grid-rows-[repeat(6,21.7px)] items-center justify-items-center border-b border-[#dbdad6] pl-[4px] pt-[6px]">
      {gallery.map((icon, i) => (
        <svg key={i} viewBox="0 0 18 18" className="h-[18px] w-[18px]" fill="none" stroke={INK} strokeWidth="1" fontFamily="Roboto, sans-serif">
          {icon}
        </svg>
      ))}
    </div>
    <div className="flex h-[26px] items-center border-b border-[#dbdad6] pl-[11px] pt-[6px] text-[12px]">Crea oggetto visivo</div>
    <div className="flex h-[27px] items-center pl-[11px] pt-[5px] text-[12px]">Valori</div>
    <Dropzone>Aggiungi campi dati qui</Dropzone>
    <div className="flex h-[35px] items-center pl-[12px] pt-[5px] text-[15px] font-medium">Drill-through</div>
    <div className="flex h-[27px] items-center justify-between pl-[9px] pr-[8px] text-[12px]">
      Report incrociato
      <Toggle on={false} />
    </div>
    <div className="flex h-[27px] items-center justify-between pl-[9px] pr-[8px] text-[12px]">
      Mantieni tutti i filtri
      <Toggle on />
    </div>
    <div className="flex h-[27px] items-center justify-between pl-[9px] pr-[8px] text-[12px]">
      Mantieni tutti i filtri
      <Toggle on />
    </div>
    <div className="mt-[4px]">
      <Dropzone>Aggiungi campi drill-through</Dropzone>
    </div>
  </div>
)

const fields = ['DimAccount', 'DimDate', 'DimProductCategory', 'DimScenario', 'FactStrategyPlan']

const DataPane = () => (
  <div className="flex-1 bg-[#f0efec] text-[#222]">
    <div className="flex h-[38px] items-center justify-between pl-[8px] pr-[6px] pt-[2px]">
      <span className="text-[15px] font-medium">Dati</span>
      <ChevronsRight size={18} strokeWidth={1.2} />
    </div>
    <div className="pl-[5px] pt-[5px]">
      <SearchBox w="w-[165px]" bg="bg-white" />
    </div>
    <div className="pl-[7px] pt-[9px]">
      {fields.map((f) => (
        <div key={f} className="flex h-[23px] items-center text-[12px]">
          <ChevronRight size={14} strokeWidth={1.2} />
          <svg viewBox="0 0 13 13" className="ml-[3px] h-[13px] w-[13px]" fill="none" stroke="#333" strokeWidth="1">
            <rect x="0.5" y="1.5" width="12" height="10" />
            <path d="M0.5 4.5h12 M0.5 8h12 M4.5 1.5v10 M8.5 1.5v10" />
          </svg>
          <span className="ml-[5px]">{f}</span>
        </div>
      ))}
    </div>
  </div>
)

const StatusBar = () => (
  <div className="flex h-[22px] items-center border-t border-[#d8d7d3] bg-[#f0efeb] text-[12px] text-[#222]">
    <span className="ml-[5px]">Pagina 1 di 1</span>
    <Minus size={11} strokeWidth={1.5} className="ml-[1154px]" />
    <div className="ml-[4px] flex w-[80px] items-center">
      <div className="h-px w-[30px] bg-[#444]" />
      <div className="h-[12px] w-[3px] bg-[#444]" />
      <div className="h-px w-[47px] bg-[#444]" />
    </div>
    <Plus size={11} strokeWidth={1.5} className="ml-[4px]" />
    <span className="ml-[10px] text-[13px]">20%</span>
    <svg viewBox="0 0 14 14" className="ml-[13px] h-[14px] w-[14px]" fill="none" stroke="#333" strokeWidth="1">
      <rect x="1" y="2" width="12" height="10" />
      <path d="M1 5h12 M6 5v7 M3 8h2" />
    </svg>
  </div>
)

export default function App() {
  return (
    <div className="flex h-[768px] w-[1408px] flex-col overflow-hidden bg-[#f0efeb] font-['Roboto',sans-serif]">
      <TitleBar />
      <MenuTabs />
      <Ribbon />
      <div className="flex h-[598px]">
        <Rail />
        <div className="flex w-[819px] shrink-0 flex-col">
          <Canvas />
          <PageTabs />
        </div>
        <FilterPane />
        <VizPane />
        <DataPane />
      </div>
      <StatusBar />
    </div>
  )
}
